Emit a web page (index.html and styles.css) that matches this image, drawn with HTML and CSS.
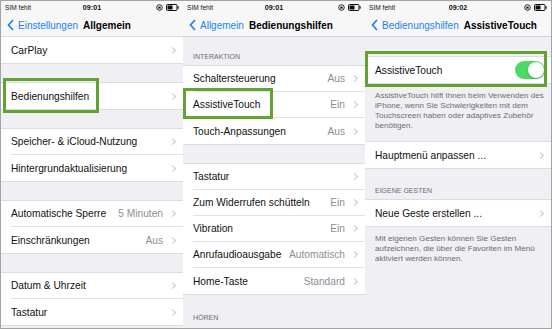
FILE: index.html
```html
<!DOCTYPE html>
<html lang="de">
  <head>
    <meta charset="UTF-8" />
    <title>Bedienungshilfen – AssistiveTouch</title>
    <link rel="stylesheet" href="styles.css">
  </head>
  <body>
    <div class="shot">
      <!-- Bildschirm 1: Allgemein -->
      <section class="phone p1">
        <div class="status">
          <span class="carrier">SIM fehlt</span>
          <span class="time">09:01</span>
          <span class="icons">
            <svg width="7" height="7" viewBox="0 0 7 7"><circle cx="3.5" cy="3.5" r="2.8" fill="none" stroke="#111" stroke-width="0.9"/><rect x="2.3" y="2.6" width="2.4" height="2" fill="#111"/></svg>
            <svg width="13" height="7" viewBox="0 0 13 7"><rect x="0.5" y="0.5" width="10.5" height="6" rx="1" fill="none" stroke="#111"/><rect x="1.5" y="1.5" width="5" height="4" fill="#111"/><rect x="11.5" y="2.3" width="1.2" height="2.4" fill="#111"/></svg>
          </span>
        </div>
        <div class="nav">
          <svg class="back-icon" width="7" height="12" viewBox="0 0 7 12"><polyline points="6,1 1.5,6 6,11" fill="none" stroke="#1a82f7" stroke-width="1.7"/></svg>
          <span class="back">Einstellungen</span>
          <span class="title">Allgemein</span>
        </div>

        <div class="group flush">
          <div class="row"><span class="label">CarPlay</span><i class="chev"></i></div>
        </div>
        <div class="group">
          <div class="row"><span class="label">Bedienungshilfen</span><i class="chev"></i></div>
        </div>
        <div class="group">
          <div class="row"><span class="label">Speicher- &amp; iCloud-Nutzung</span><i class="chev"></i></div>
          <div class="row"><span class="label">Hintergrundaktualisierung</span><i class="chev"></i></div>
        </div>
        <div class="group">
          <div class="row"><span class="label">Automatische Sperre</span><span class="value">5 Minuten</span><i class="chev"></i></div>
          <div class="row"><span class="label">Einschränkungen</span><span class="value">Aus</span><i class="chev"></i></div>
        </div>
        <div class="group">
          <div class="row"><span class="label">Datum &amp; Uhrzeit</span><i class="chev"></i></div>
          <div class="row"><span class="label">Tastatur</span><i class="chev"></i></div>
        </div>

        <div class="mark"></div>
      </section>

      <!-- Bildschirm 2: Bedienungshilfen -->
      <section class="phone p2">
        <div class="status">
          <span class="carrier">SIM fehlt</span>
          <span class="time">09:01</span>
          <span class="icons">
            <svg width="7" height="7" viewBox="0 0 7 7"><circle cx="3.5" cy="3.5" r="2.8" fill="none" stroke="#111" stroke-width="0.9"/><rect x="2.3" y="2.6" width="2.4" height="2" fill="#111"/></svg>
            <svg width="13" height="7" viewBox="0 0 13 7"><rect x="0.5" y="0.5" width="10.5" height="6" rx="1" fill="none" stroke="#111"/><rect x="1.5" y="1.5" width="5" height="4" fill="#111"/><rect x="11.5" y="2.3" width="1.2" height="2.4" fill="#111"/></svg>
          </span>
        </div>
        <div class="nav">
          <svg class="back-icon" width="7" height="12" viewBox="0 0 7 12"><polyline points="6,1 1.5,6 6,11" fill="none" stroke="#1a82f7" stroke-width="1.7"/></svg>
          <span class="back">Allgemein</span>
          <span class="title">Bedienungshilfen</span>
        </div>

        <div class="header first">Interaktion</div>
        <div class="group flush">
          <div class="row"><span class="label">Schaltersteuerung</span><span class="value">Aus</span><i class="chev"></i></div>
          <div class="row"><span class="label">AssistiveTouch</span><span class="value">Ein</span><i class="chev"></i></div>
          <div class="row"><span class="label">Touch-Anpassungen</span><span class="value">Aus</span><i class="chev"></i></div>
        </div>
        <div class="group">
          <div class="row"><span class="label">Tastatur</span><i class="chev"></i></div>
          <div class="row"><span class="label">Zum Widerrufen schütteln</span><span class="value">Ein</span><i class="chev"></i></div>
          <div class="row"><span class="label">Vibration</span><span class="value">Ein</span><i class="chev"></i></div>
          <div class="row"><span class="label">Anrufaudioausgabe</span><span class="value">Automatisch</span><i class="chev"></i></div>
          <div class="row"><span class="label">Home-Taste</span><span class="value">Standard</span><i class="chev"></i></div>
        </div>
        <div class="header tall">Hören</div>

        <div class="mark"></div>
      </section>

      <!-- Bildschirm 3: AssistiveTouch -->
      <section class="phone p3">
        <div class="status">
          <span class="carrier">SIM fehlt</span>
          <span class="time">09:02</span>
          <span class="icons">
            <svg width="7" height="7" viewBox="0 0 7 7"><circle cx="3.5" cy="3.5" r="2.8" fill="none" stroke="#111" stroke-width="0.9"/><rect x="2.3" y="2.6" width="2.4" height="2" fill="#111"/></svg>
            <svg width="13" height="7" viewBox="0 0 13 7"><rect x="0.5" y="0.5" width="10.5" height="6" rx="1" fill="none" stroke="#111"/><rect x="1.5" y="1.5" width="5" height="4" fill="#111"/><rect x="11.5" y="2.3" width="1.2" height="2.4" fill="#111"/></svg>
          </span>
        </div>
        <div class="nav">
          <svg class="back-icon" width="7" height="12" viewBox="0 0 7 12"><polyline points="6,1 1.5,6 6,11" fill="none" stroke="#1a82f7" stroke-width="1.7"/></svg>
          <span class="back">Bedienungshilfen</span>
          <span class="title">AssistiveTouch</span>
        </div>

        <div class="group">
          <div class="row"><span class="label">AssistiveTouch</span><span class="toggle on"></span></div>
        </div>
        <p class="footer">
          AssistiveTouch hilft Ihnen beim Verwenden des<br>
          iPhone, wenn Sie Schwierigkeiten mit dem<br>
          Touchscreen haben oder adaptives Zubehör<br>
          benötigen.
        </p>
        <div class="group tight">
          <div class="row"><span class="label">Hauptmenü anpassen ...</span><i class="chev"></i></div>
        </div>
        <div class="header">Eigene Gesten</div>
        <div class="group flush">
          <div class="row"><span class="label">Neue Geste erstellen ...</span><i class="chev"></i></div>
        </div>
        <p class="footer">
          Mit eigenen Gesten können Sie Gesten<br>
          aufzeichnen, die über die Favoriten im Menü<br>
          aktiviert werden können.
        </p>

        <div class="mark"></div>
      </section>
    </div>
  </body>
</html>
```

FILE: styles.css
```css
body {
  margin: 0;
  padding: 0;
  font-family: "Liberation Sans", Arial, sans-serif;
  background-color: #ffffff;
}

.shot {
  display: flex;
  width: 552px;
  height: 329px;
  box-sizing: border-box;
  border: 1px solid #a3a3a3;
  overflow: hidden;
}

.phone {
  position: relative;
  flex: 0 0 auto;
  height: 100%;
  background-color: #efeff4;
  overflow: hidden;
}

.p1 { width: 182px; }
.p2 { width: 182px; }
.p3 { width: 186px; }

/* Statusleiste */
.status {
  display: grid;
  grid-template-columns: 1fr auto 1fr;
  align-items: center;
  height: 13px;
  padding: 0 4px;
  background-color: #f7f7f8;
  font-size: 6.6px;
  color: #111;
}

.time {
  font-weight: bold;
  font-size: 7.2px;
}

.icons {
  display: flex;
  justify-content: flex-end;
  align-items: center;
  gap: 3px;
}

.icons svg {
  display: block;
}

/* Navigationsleiste */
.nav {
  display: flex;
  align-items: center;
  height: 22px;
  padding-left: 6px;
  background-color: #f7f7f8;
  border-bottom: 1px solid #d4d4d8;
  font-size: 10px;
  white-space: nowrap;
}

.back-icon {
  margin-right: 4px;
}

.back {
  color: #1a82f7;
  margin-right: 5px;
}

.title {
  font-weight: bold;
  color: #000;
}

/* Listen */
.group {
  margin-top: 20px;
  background-color: #fff;
  box-shadow: 0 -1px 0 #dcdce0, 0 1px 0 #dcdce0;
}

.group.flush {
  margin-top: 0;
}

.group.tight {
  margin-top: 11px;
}

.row {
  display: flex;
  align-items: center;
  height: 26px;
  box-sizing: border-box;
  margin-left: 10px;
  padding-right: 6px;
  border-bottom: 1px solid #e2e2e6;
  font-size: 10.2px;
  color: #111;
  white-space: nowrap;
}

.row:last-child {
  border-bottom: none;
}

.label {
  flex: 1;
}

.value {
  color: #8e8e93;
  margin-right: 7px;
}

.chev {
  width: 4px;
  height: 4px;
  margin-right: 2px;
  border-top: 1px solid #c7c7cc;
  border-right: 1px solid #c7c7cc;
  transform: rotate(45deg);
}

.header {
  display: flex;
  align-items: flex-end;
  height: 32px;
  box-sizing: border-box;
  padding: 0 0 5px 10px;
  font-size: 7px;
  line-height: 8px;
  text-transform: uppercase;
  color: #6d6d72;
}

.header.first {
  height: 29px;
}

.header.tall {
  height: 33px;
}

.footer {
  margin: 0;
  padding: 8px 4px 0 10px;
  font-size: 8.1px;
  line-height: 10px;
  color: #6d6d72;
  white-space: nowrap;
}

/* Schalter */
.toggle {
  position: relative;
  width: 30px;
  height: 18px;
  border-radius: 9px;
  background-color: #4cd964;
}

.toggle::after {
  content: "";
  position: absolute;
  top: 1px;
  right: 1px;
  width: 16px;
  height: 16px;
  border-radius: 50%;
  background-color: #fff;
  box-shadow: 0 1px 2px rgba(0, 0, 0, 0.25);
}

/* grüne Markierung */
.mark {
  position: absolute;
  box-sizing: border-box;
  border: 3px solid #62a433;
}

.p1 .mark {
  left: 2px;
  top: 77px;
  width: 96px;
  height: 35px;
}

.p2 .mark {
  left: 0;
  top: 87px;
  width: 90px;
  height: 31px;
}

.p3 .mark {
  left: 0;
  top: 50px;
  width: 182px;
  height: 36px;
}
```
